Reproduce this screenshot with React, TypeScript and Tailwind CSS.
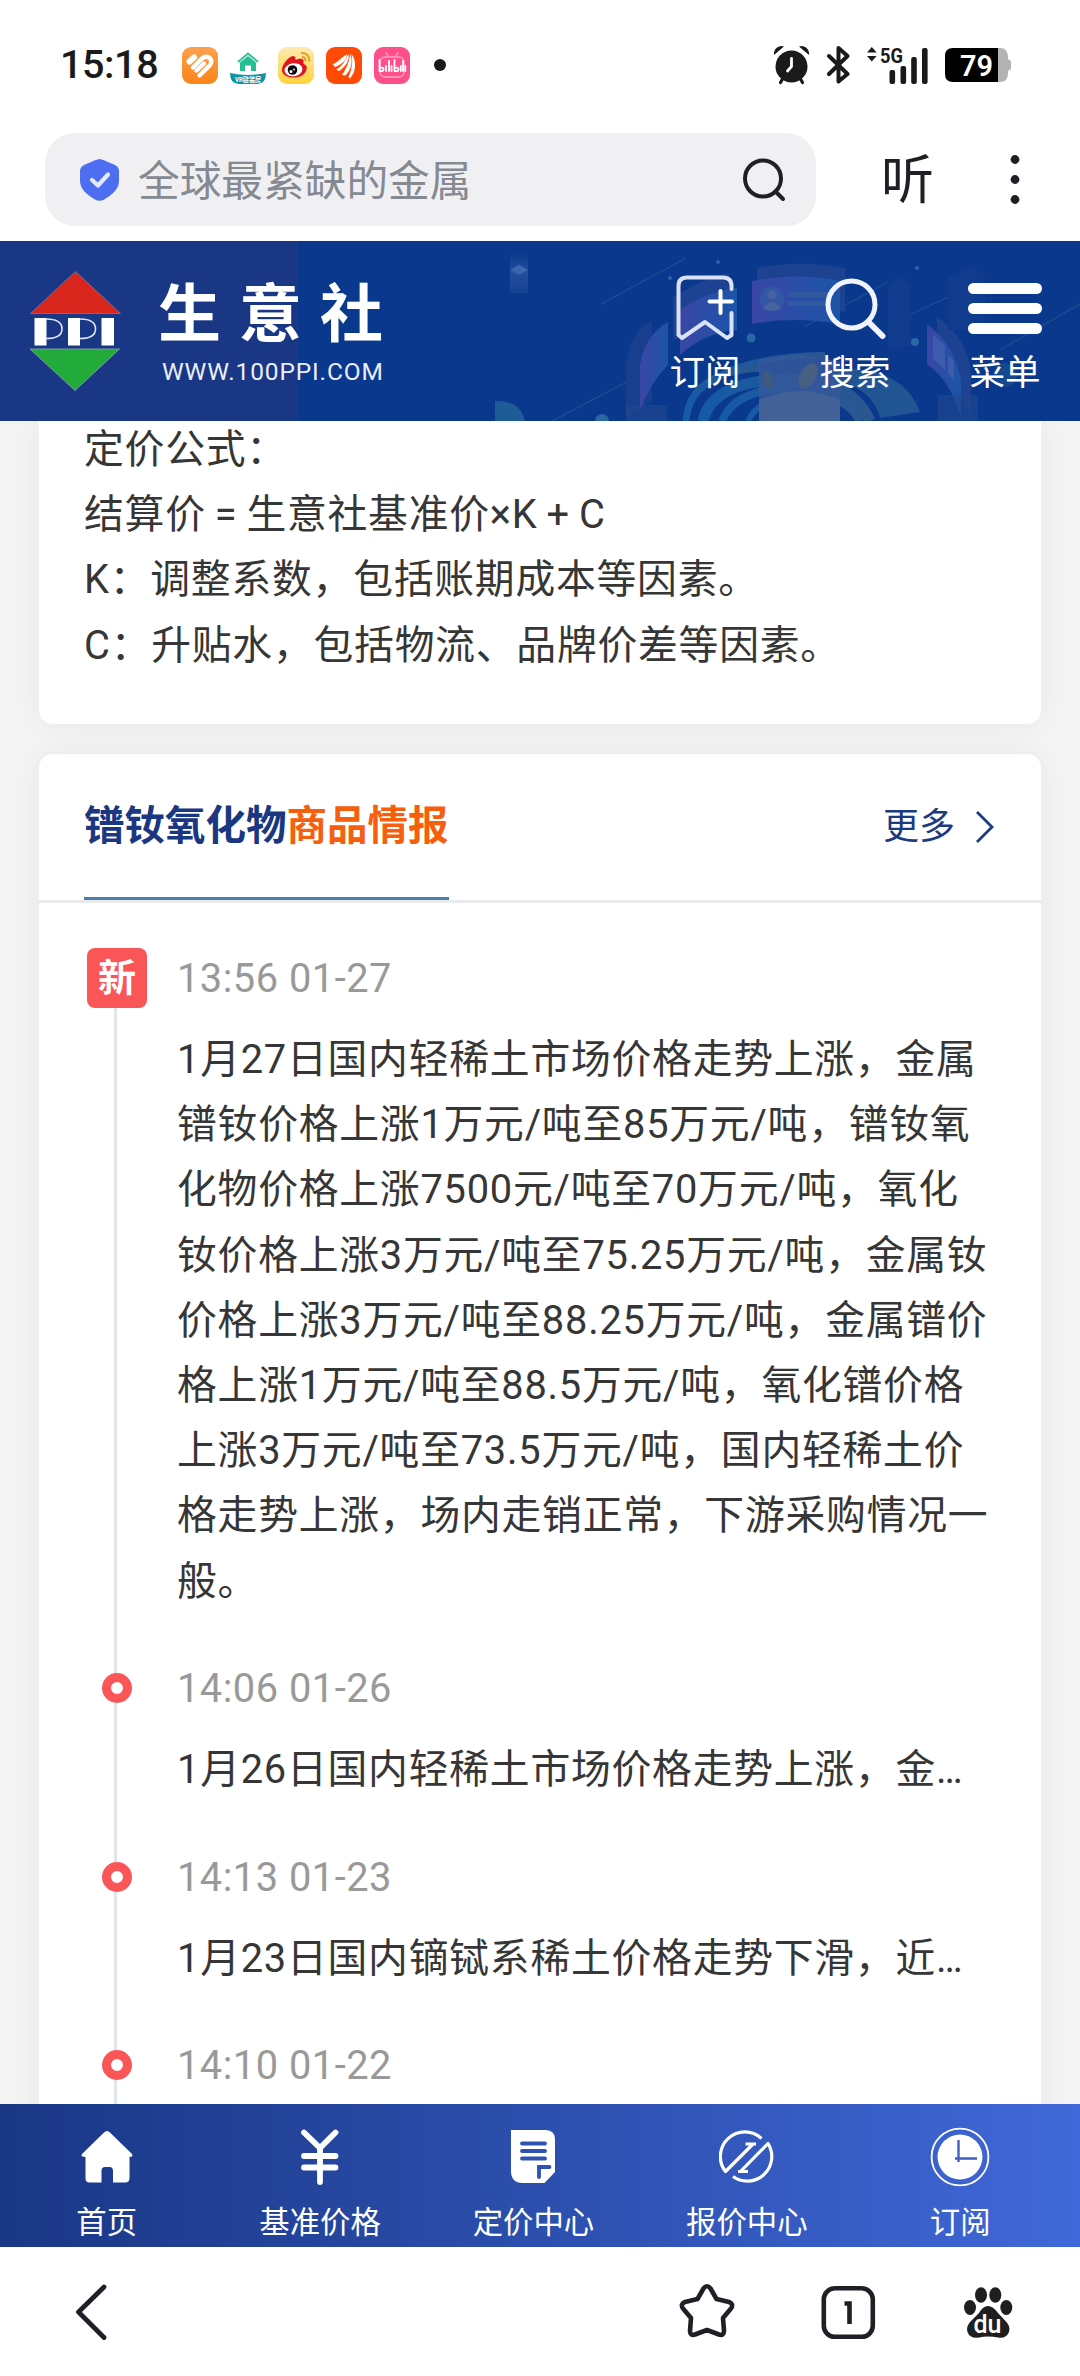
import React from "react";

const sans = "font-[Roboto,'Noto_Sans_CJK_SC',sans-serif]";
const body = "text-[39.8px] leading-[65.2px] tracking-[0.77px] [word-spacing:-1.6px] text-[#363636] whitespace-nowrap";

function StatusBar() {
  return (
    <div className="flex h-[130px] items-center pl-[60px] pr-[69px]">
      <span className="w-[122px] whitespace-nowrap text-[39.5px] font-medium leading-[40px] tracking-[-0.4px] text-[#1a1a1a]">15:18</span>
      <div className="flex items-center gap-3">
        <svg width="36" height="37" viewBox="0 0 36 37">
          <defs>
            <linearGradient id="or" x1="0" y1="0" x2="0" y2="1"><stop offset="0" stopColor="#fda04c" /><stop offset="1" stopColor="#fb8419" /></linearGradient>
          </defs>
          <rect width="36" height="37" rx="9" fill="url(#or)" />
          <g fill="none" stroke="#fff" strokeLinecap="round" strokeWidth="4.4">
            <path d="M7.500 14.500L12 10.500" strokeWidth="6" />
            <path d="M11 20.500L20 11.500" />
            <path d="M14.500 23.500L22 16.500" />
            <path d="M17.500 28.500L28 18Q31 13.500 27 10.500Q23.500 8.500 20 11.500" />
          </g>
        </svg>
        <svg width="36" height="37" viewBox="0 0 36 37">
          <path d="M0 26Q18 30 36 26Q36 37 27 37H9Q0 37 0 26Z" fill="#0d93a5" />
          <path d="M8 15L18 6.500L28 15" fill="none" stroke="#2fc195" strokeWidth="2" />
          <path d="M10 15.500L18 9L26 15.500V24H21V18.500H15V24H10Z" fill="#25bd92" />
          <text x="18" y="35" textAnchor="middle" fontSize="6.500" fontWeight="700" textLength="26" lengthAdjust="spacingAndGlyphs" fill="#fff" fontFamily="Roboto, 'Noto Sans CJK SC'">VR链装房</text>
        </svg>
        <svg width="36" height="37" viewBox="0 0 36 37">
          <defs>
            <linearGradient id="ye" x1="0" y1="0" x2="0" y2="1"><stop offset="0" stopColor="#fdeab0" /><stop offset="1" stopColor="#ffd23c" /></linearGradient>
          </defs>
          <rect width="36" height="37" rx="9" fill="url(#ye)" />
          <path d="M4 23C4 17 11 9.500 15 9C18 9 17.500 12 17.500 13C21 11.500 25 11 25.500 13.500V17C29 18 29.500 21 28 24C25 30 19 31 14 30.500C8 30 4 27 4 23Z" fill="#e0161e" />
          <ellipse cx="15.500" cy="22.800" rx="9" ry="6.500" fill="#fff" transform="rotate(-8 15.500 22.800)" />
          <circle cx="14.500" cy="23" r="4.800" fill="#0a0a0a" />
          <circle cx="13" cy="24.500" r="1.500" fill="#fff" />
          <circle cx="16" cy="22.500" r=".9" fill="#fff" />
          <g fill="none" stroke="#e79d2c" strokeWidth="2"><path d="M23 6Q31.500 5.500 31.500 14.500" /><path d="M24 10Q27.500 10 27.500 14" /></g>
        </svg>
        <svg width="36" height="37" viewBox="0 0 36 37">
          <rect width="36" height="37" rx="9" fill="#ff4a05" />
          <g fill="#fff">
            <path d="M6.500 17C12 16 15 10 21 7.500C21 12 16 18 9 20Z" />
            <path d="M10 22.500C16 20 19 14 22.500 7C24 12 20 20 13 24Z" />
            <path d="M16 28C20 22 23.500 15 24 7C27 13 26 22 19.500 28.500Z" />
            <path d="M22.500 30C26 22 27 15 25.500 7C31 14 30 25 24 31.500Z" />
          </g>
        </svg>
        <svg width="36" height="37" viewBox="0 0 36 37">
          <rect width="36" height="37" rx="9" fill="#ff4f8b" />
          <g stroke="#ff8fb4" strokeWidth="1.800" fill="none" strokeLinecap="round"><path d="M12 6L15 10M24 6L21 10" /><rect x="6" y="10" width="24" height="20" rx="5" /></g>
          <g stroke="#fff" strokeWidth="1.800" fill="none" strokeLinecap="round">
            <path d="M5.500 13V24Q10 25 9.500 21.500Q8.500 20 6 21" /><path d="M12 19V24M15 14V24M17.500 19V24" />
            <path d="M20.500 13V24Q25 25 24.500 21.500Q23.500 20 21 21" /><path d="M26.800 19V24M29 14V24M31.300 19V24" />
          </g>
        </svg>
      </div>
      <span className="ml-6 size-3 rounded-full bg-[#1a1a1a]" />
      <div className="ml-auto flex items-center gap-[17px]">
        <svg width="37" height="40" viewBox="0 0 37 40">
          <circle cx="18.500" cy="21.500" r="16" fill="#1a1a1a" />
          <g stroke="#1a1a1a" strokeLinecap="round" strokeWidth="3.200"><path d="M10 33L7.500 37.500M27 33L29.500 37.500" /></g>
          <path d="M1 10Q.5 5 4 2.500Q7.500 0 11 1.500ZM36 10Q36.500 5 33 2.500Q29.500 0 26 1.500Z" fill="#1a1a1a" />
          <path d="M18.500 13.500V21.500L14.500 26" fill="none" stroke="#fff" strokeWidth="2.800" strokeLinecap="round" />
        </svg>
        <svg width="23" height="40" viewBox="0 0 23 40">
          <path d="M2 11L20.500 29L11.500 36.500V3L20.500 11L2 29" fill="none" stroke="#1a1a1a" strokeWidth="4" strokeLinejoin="round" strokeLinecap="round" />
        </svg>
        <svg width="61" height="40" viewBox="0 0 61 40">
          <path d="M0 7.500L4.800 2L9.600 7.500ZM0 11L4.800 16.500L9.600 11Z" fill="#1a1a1a" />
          <text x="13" y="17.500" fontSize="21" fontWeight="700" textLength="23" lengthAdjust="spacingAndGlyphs" fill="#1a1a1a" fontFamily="Roboto">5G</text>
          <g fill="#1a1a1a">
            <rect x="22.500" y="25" width="5.600" height="14" rx="2" />
            <rect x="33.500" y="21" width="5.600" height="18" rx="2" />
            <rect x="44.200" y="12" width="5.600" height="27" rx="2" />
            <rect x="55" y="3" width="5.600" height="36" rx="2" />
          </g>
        </svg>
        <svg className="overflow-visible" width="66" height="34" viewBox="0 0 66 34">
          <path d="M50 0H55Q63 0 63 9V11L66 13V21L63 23V25Q63 34 55 34H50Z" fill="#b3b3b3" />
          <path d="M8 0H53V34H8Q0 34 0 26V8Q0 0 8 0Z" fill="#000" />
          <text x="31.500" y="28" textAnchor="middle" fontSize="30" fontWeight="600" textLength="33" lengthAdjust="spacingAndGlyphs" fill="#fff" fontFamily="Roboto">79</text>
        </svg>
      </div>
    </div>
  );
}

function SearchRow() {
  return (
    <div className="flex h-[111px] items-start pl-[45px] pr-[60px] pt-[3px]">
      <div className="flex h-[93px] w-[771px] items-center rounded-[30px] bg-[#f0f0f3] pl-[35px] pr-[30px]">
        <svg width="39" height="42" viewBox="0 0 39 42">
          <path d="M19.500 0Q22 0 35 6Q39 8 39 12V22Q39 32 24 40.500Q19.500 43 15 40.500Q0 32 0 22V12Q0 8 4 6Q17 0 19.500 0Z" fill="#4e6ef2" />
          <path d="M12 21L18 26.500L28 15.500" fill="none" stroke="#fff" strokeOpacity=".85" strokeWidth="4.200" strokeLinecap="round" strokeLinejoin="round" />
        </svg>
        <span className="ml-[19px] mt-[4px] whitespace-nowrap text-[41.700px] leading-[60px] text-[#858992]">全球最紧缺的金属</span>
        <svg className="ml-auto" width="46" height="46" viewBox="738 155.500 46 46">
          <circle cx="761" cy="177" r="18" fill="none" stroke="#1f2025" strokeWidth="4" />
          <path d="M773.500 190L781 197.500" stroke="#1f2025" strokeWidth="4" strokeLinecap="round" />
        </svg>
      </div>
      <span className="ml-[65px] mt-[2px] w-[56px] text-[53px] leading-[92px] text-[#1f2025]">听</span>
      <svg className="ml-auto mt-[21px]" width="10" height="52" viewBox="0 0 10 52">
        <g fill="#1f2025"><circle cx="5" cy="5.500" r="4.400" /><circle cx="5" cy="25.500" r="4.400" /><circle cx="5" cy="45.500" r="4.400" /></g>
      </svg>
    </div>
  );
}

function HeaderArt() {
  return (
    <svg className="absolute inset-0" width="1080" height="180" viewBox="0 241 1080 180">
      <defs>
        <linearGradient id="pv" x1="0" y1="0" x2="1" y2="0"><stop offset="0" stopColor="#3a46a6" /><stop offset="1" stopColor="#1b55a8" /></linearGradient>
        <linearGradient id="cube" x1="0" y1="0" x2="0" y2="1"><stop offset="0" stopColor="#2f58a4" stopOpacity="0" /><stop offset=".5" stopColor="#2f58a4" stopOpacity=".7" /><stop offset="1" stopColor="#2f58a4" stopOpacity=".3" /></linearGradient>
        <linearGradient id="arc" x1="0" y1="0" x2="1" y2="0"><stop offset="0" stopColor="#145aa6" /><stop offset="1" stopColor="#2b5790" /></linearGradient>
      </defs>
      <rect x="510" y="252" width="18" height="41" fill="url(#cube)" />
      <path d="M510 270L519 264.500L528 270L519 275Z" fill="#3a66ad" />
      <path d="M495 401Q520 400 525 421H495Z" fill="#1d5c97" />
      <g stroke="#1f4f92" strokeWidth="1.200" fill="none">
        <path d="M601 304L686 258M552 421L640 375M804 327L888 282M903 318L985 280M1000 350L1080 304" />
      </g>
      <path d="M757 268Q800 259 845 268V312L757 300Z" fill="#1c4291" />
      <path d="M752 281Q800 272 840 281V324Q795 316 752 324Z" fill="url(#pv)" />
      <circle cx="772" cy="299" r="12" fill="#3258a4" />
      <circle cx="772" cy="295" r="4.500" fill="#46629f" /><path d="M763 308Q772 296 781 308Q772 314 763 308Z" fill="#46629f" />
      <path d="M788 292H830V297H788ZM788 301H830V306H788Z" fill="#31599f" />
      <path d="M673 297Q700 280 729 273V325L673 340Z" fill="#1c4291" />
      <path d="M680 310Q705 292 737 288V330Q705 332 680 355Z" fill="url(#pv)" />
      <path d="M626 365Q630 330 652 321V400L626 418Z" fill="#183f8e" />
      <path d="M640 365Q645 335 668 322V365Q648 385 640 412Z" fill="url(#pv)" />
      <path d="M937 317Q965 335 971 370V415L937 355Z" fill="#1c4291" />
      <path d="M927 324Q955 345 961 380V417Q950 380 927 364Z" fill="url(#pv)" />
      <path d="M933 335L945 345V370L933 358ZM948 355L954 361V380L948 374Z" fill="#3d5cae" />
      <path d="M888 287L898 274L911 284V345L888 352ZM948 278L970 265L985 275V330H948Z" fill="#113c8d" />
      <g fill="none" stroke="url(#arc)">
        <path d="M700 390Q735 356 825 355" strokeWidth="6" />
        <path d="M686 421Q690 372 760 368" strokeWidth="7" />
        <path d="M703 421Q712 380 790 379Q850 378 870 421" strokeWidth="11" />
        <path d="M722 421Q735 388 795 388Q848 388 860 421" strokeWidth="8" />
        <path d="M748 421Q760 396 800 396Q848 396 858 421" strokeWidth="6" />
      </g>
      <path d="M845 368Q905 370 920 412L880 418Q872 388 835 380Z" fill="#205493" />
      <path d="M759 360Q800 350 840 362V421H759Z" fill="#35589b" opacity=".85" />
      <path d="M759 400Q800 382 840 400V421H759Z" fill="#426197" />
      <ellipse cx="808" cy="376" rx="8" ry="14" transform="rotate(30 808 376)" fill="#475f83" />
      <ellipse cx="768" cy="380" rx="6" ry="9" transform="rotate(-20 768 380)" fill="#3e5a83" />
      <g fill="#2767a4"><circle cx="751" cy="338" r="4.500" /><circle cx="915" cy="342" r="4" /><circle cx="602" cy="421" r="7" /><circle cx="718" cy="262" r="2" /><circle cx="670" cy="278" r="2" /><circle cx="917" cy="268" r="2" /></g>
      <circle cx="1005" cy="375" r="12" fill="#164890" />
      <path d="M626 405H667V421H626ZM938 395H978V421H938Z" fill="#21488f" opacity=".6" />
    </svg>
  );
}

function HeaderItem({ label, children }: { label: string; children: React.ReactNode }) {
  return (
    <div className="flex w-[150px] flex-col items-center">
      <div className="flex h-[80px] items-center">{children}</div>
      <span className="mt-[3px] text-[35.500px] leading-[44px] text-white">{label}</span>
    </div>
  );
}

function SiteHeader() {
  return (
    <div className="relative flex h-[180px] overflow-hidden bg-[#0a388c]">
      <HeaderArt />
      <div className="relative flex h-full w-[298px] bg-[#1a3785]">
        <svg className="ml-[29px] mt-[29px] shrink-0" width="93" height="122" viewBox="29 270 93 122">
          <path d="M75.500 271.500L120.500 313.500H30.500Z" fill="#d9261c" stroke="#7a6a8e" strokeWidth="1" />
          <path d="M30 349L119.500 349L75 390.500Z" fill="#22aa3a" stroke="#7a9aa0" strokeWidth="1" />
          <g fill="#fff"><rect x="34.500" y="318" width="12" height="27.500" /><rect x="68" y="318" width="12" height="27.500" /><rect x="101.500" y="318" width="12.500" height="27.500" /></g>
          <g fill="none" stroke="#dfe6f5" strokeWidth="1.600"><path d="M46 319Q62 319 62 329Q62 338.500 46 338.500" /><path d="M80 319Q95.500 319 95.500 329Q95.500 338.500 80 338.500" /></g>
        </svg>
        <div className="ml-[36px] mt-[38px] flex flex-col whitespace-nowrap">
          <span className="text-[63px] font-bold leading-[72px] tracking-[18px] text-white">生意社</span>
          <span className="ml-[4px] mt-[6px] text-[24.500px] leading-[30px] tracking-[0.850px] text-[#e8eefb]">WWW.100PPI.COM</span>
        </div>
      </div>
      <div className="relative ml-auto flex pt-[27px]">
        <HeaderItem label="订阅">
          <svg width="62" height="70" viewBox="674 274 62 70">
            <g fill="none" stroke="#d9e2f6" strokeLinecap="round" strokeLinejoin="round" strokeWidth="4">
              <path d="M731.500 290V287Q731.500 278.500 723 278.500H687Q678.500 278.500 678.500 287V336L682 339L705 323L727 339L731.500 336V314" />
              <path d="M720.500 292V314M709.500 302.500H732" stroke="#fff" />
            </g>
          </svg>
        </HeaderItem>
        <HeaderItem label="搜索">
          <svg width="64" height="64" viewBox="823 276.500 64 64">
            <g fill="none" stroke="#f1f4fd" strokeWidth="5" strokeLinecap="round"><circle cx="851.500" cy="305" r="23.500" /><path d="M869 323L882.500 336.500" strokeWidth="6" /></g>
          </svg>
        </HeaderItem>
        <HeaderItem label="菜单">
          <div className="flex flex-col gap-[9px]">
            <span className="h-[11px] w-[74px] rounded-full bg-white" />
            <span className="h-[11px] w-[74px] rounded-full bg-white" />
            <span className="h-[11px] w-[74px] rounded-full bg-white" />
          </div>
        </HeaderItem>
      </div>
    </div>
  );
}

const formula = [
  "定价公式：",
  "结算价 = 生意社基准价×K + C",
  "K：调整系数，包括账期成本等因素。",
  "C：升贴水，包括物流、品牌价差等因素。",
];

const news = [
  {
    time: "13:56 01-27",
    fresh: true,
    lines: [
      "1月27日国内轻稀土市场价格走势上涨，金属",
      "镨钕价格上涨1万元/吨至85万元/吨，镨钕氧",
      "化物价格上涨7500元/吨至70万元/吨，氧化",
      "钕价格上涨3万元/吨至75.25万元/吨，金属钕",
      "价格上涨3万元/吨至88.25万元/吨，金属镨价",
      "格上涨1万元/吨至88.5万元/吨，氧化镨价格",
      "上涨3万元/吨至73.5万元/吨，国内轻稀土价",
      "格走势上涨，场内走销正常，下游采购情况一",
      "般。",
    ],
  },
  { time: "14:06 01-26", lines: ["1月26日国内轻稀土市场价格走势上涨，金…"] },
  { time: "14:13 01-23", lines: ["1月23日国内镝铽系稀土价格走势下滑，近…"] },
  { time: "14:10 01-22", lines: [] },
];

function Marker({ fresh }: { fresh?: boolean }) {
  return fresh ? (
    <span className="z-10 flex size-[60px] items-center justify-center rounded-[8px] bg-[#fa5557] text-[38px] font-bold text-white">新</span>
  ) : (
    <span className="z-10 mt-[15px] size-[30px] rounded-full border-[9px] border-[#fa5557] bg-white" />
  );
}

function Content() {
  return (
    <div className="flex h-[1683px] flex-col gap-[30px] overflow-hidden bg-[#f4f4f4] px-[39px]">
      <div className="h-[303px] shrink-0 rounded-b-[14px] bg-white px-[45px] shadow-[0_0_30px_rgba(0,0,0,0.06)]">
        <div className="-mt-[4px]">
          {formula.map((l) => (
            <p key={l} className={body}>{l}</p>
          ))}
        </div>
      </div>
      <div className="grow rounded-t-[14px] bg-white shadow-[0_0_30px_rgba(0,0,0,0.06)]">
        <div className="flex h-[149px] items-stretch justify-between border-b-[3px] border-[#e8eaeb] pl-[45px] pr-[47px]">
          <h2 className="flex h-[146px] items-center whitespace-nowrap border-b-[3px] border-[#4a7dac] pt-[2px] text-[40.500px] font-bold text-[#1b3781]">
            镨钕氧化物<span className="text-[#f55f0e]">商品情报</span>
          </h2>
          <div className="flex items-center gap-[20px] text-[36px] text-[#1b3a80]">
            更多
            <svg width="19" height="34" viewBox="0 0 19 34"><path d="M2 2L17 17L2 32" fill="none" stroke="#1b3a80" strokeWidth="2.800" /></svg>
          </div>
        </div>
        <div className="relative pt-[45px]">
          <div className="absolute left-[75px] top-[60px] h-[1300px] w-[3px] bg-[#e0e6ea]" />
          {news.map((n) => (
            <div key={n.time} className="relative mb-[44.300px] flex">
              <div className="ml-[48px] flex w-[60px] flex-col items-center"><Marker fresh={n.fresh} /></div>
              <div className="ml-[30px]">
                <div className="h-[60px] whitespace-nowrap text-[39.800px] leading-[61px] tracking-[0.500px] text-[#999]">{n.time}</div>
                <div className="mt-[19px]">
                  {n.lines.map((l) => (
                    <p key={l} className={body}>{l}</p>
                  ))}
                </div>
              </div>
            </div>
          ))}
        </div>
      </div>
    </div>
  );
}

function BottomNav() {
  const items = [
    {
      label: "首页",
      icon: (
        <svg width="54" height="60" viewBox="80 2127 54 60">
          <path d="M104 2132.500Q107 2129.500 110 2132.500L132 2154Q133.500 2157 129.500 2157V2178Q129.500 2182.500 125 2182.500H113V2171Q113 2167 109.500 2167H105Q101.500 2167 101.500 2171V2182.500H89.500Q85.500 2182.500 85.500 2178V2157Q80 2157 82 2154Z" fill="#fff" />
        </svg>
      ),
    },
    {
      label: "基准价格",
      icon: (
        <svg width="40" height="60" viewBox="300 2127 40 60">
          <path d="M304 2132.500L320 2148L335.500 2132.500M320 2148V2182M304 2156H335.500M304 2167.500H335.500" fill="none" stroke="#fff" strokeWidth="5.800" strokeLinecap="round" />
        </svg>
      ),
    },
    {
      label: "定价中心",
      icon: (
        <svg width="46" height="60" viewBox="510.500 2127 46 60">
          <path d="M511.500 2130H546Q555.500 2130 555.500 2140V2172L545 2183H523Q511.500 2183 511.500 2171Z" fill="#fff" />
          <g stroke="#2f52b2" strokeWidth="3.800" strokeLinecap="round" fill="none"><path d="M522.500 2143.500H545.500M522.500 2151H545.500M522.500 2158.500H545.500" /><path d="M539.500 2177V2167H550" /></g>
        </svg>
      ),
    },
    {
      label: "报价中心",
      icon: (
        <svg width="56" height="60" viewBox="719 2127 56 60">
          <g fill="none" stroke="#fff" strokeWidth="3.200" strokeLinejoin="round">
            <path d="M761.500 2138.500A24.500 24.500 0 0 0 725.500 2171.500L753 2144M745.500 2144H756" />
            <path d="M733 2176.500A24.500 24.500 0 0 0 768 2143.500L741 2171M738 2171.500H748" />
          </g>
        </svg>
      ),
    },
    {
      label: "订阅",
      icon: (
        <svg width="60" height="60" viewBox="931 2127 60 60">
          <circle cx="961" cy="2157" r="28.400" fill="none" stroke="#fff" strokeWidth="1.800" />
          <circle cx="961" cy="2157" r="22.500" fill="#fff" />
          <path d="M959.500 2140V2162M956 2158.500H978" stroke="#3f62c0" strokeWidth="2.400" />
        </svg>
      ),
    },
  ];
  return (
    <div className="flex h-[143px] bg-linear-to-r from-[#1a3785] to-[#4068d8]">
      {items.map((it) => (
        <div key={it.label} className="flex w-[213.400px] flex-col items-center pt-[23px]">
          {it.icon}
          <span className="mt-[15px] whitespace-nowrap text-[30.400px] leading-[42px] text-white">{it.label}</span>
        </div>
      ))}
    </div>
  );
}

function BrowserBar() {
  return (
    <div className="flex h-[129px] items-center bg-white pl-[74px] pr-[66px]">
      <svg width="34" height="60" viewBox="74 2281 34 60"><path d="M104 2286L78.500 2311L104 2336.500" fill="none" stroke="#1f2025" strokeWidth="4.800" strokeLinecap="round" strokeLinejoin="round" /></svg>
      <svg className="ml-auto" width="58" height="60" viewBox="677.500 2281 58 60">
        <path d="M703 2287.500Q706.500 2283 710 2287.500L716 2298L728.500 2301Q733.500 2303 730.500 2307.500L722.500 2317L723.500 2330Q723.500 2335 718.500 2333.500L706.500 2329L694.500 2333.500Q689.500 2335 689.500 2330L690.500 2317L682.500 2307.500Q679.500 2303 684.500 2301L697 2298Z" fill="none" stroke="#1f2025" strokeWidth="4.600" strokeLinejoin="round" />
      </svg>
      <svg className="ml-[84px]" width="56" height="60" viewBox="819.500 2281 56 60">
        <rect x="823.300" y="2287.300" width="49" height="48.500" rx="11" fill="none" stroke="#1f2025" strokeWidth="4.600" />
        <path d="M844 2302.500H849V2323" fill="none" stroke="#1f2025" strokeWidth="4.600" />
      </svg>
      <svg className="ml-[86px]" width="52" height="60" viewBox="962 2281 52 60">
        <g fill="#1f1f1f">
          <ellipse cx="981" cy="2294" rx="6" ry="7.800" /><ellipse cx="995.300" cy="2294" rx="6" ry="7.800" />
          <ellipse cx="970" cy="2306.500" rx="6" ry="7.500" /><ellipse cx="1006.300" cy="2306.500" rx="6" ry="7.500" />
          <path d="M988 2305Q993 2305 998 2312L1005 2319.500Q1011 2325 1009 2331Q1006 2338 998 2336.500Q988 2334.500 979 2336.500Q970 2338 967.500 2331Q965.500 2325 971.500 2319.500L979 2312Q983 2305 988 2305Z" />
        </g>
        <text x="987.500" y="2332" textAnchor="middle" fontSize="25" fontWeight="500" fill="#fff" fontFamily="Roboto">du</text>
      </svg>
    </div>
  );
}

export default function App() {
  return (
    <div className={"flex h-[2376px] w-[1080px] flex-col overflow-hidden bg-white " + sans}>
      <StatusBar />
      <SearchRow />
      <SiteHeader />
      <Content />
      <BottomNav />
      <BrowserBar />
    </div>
  );
}
